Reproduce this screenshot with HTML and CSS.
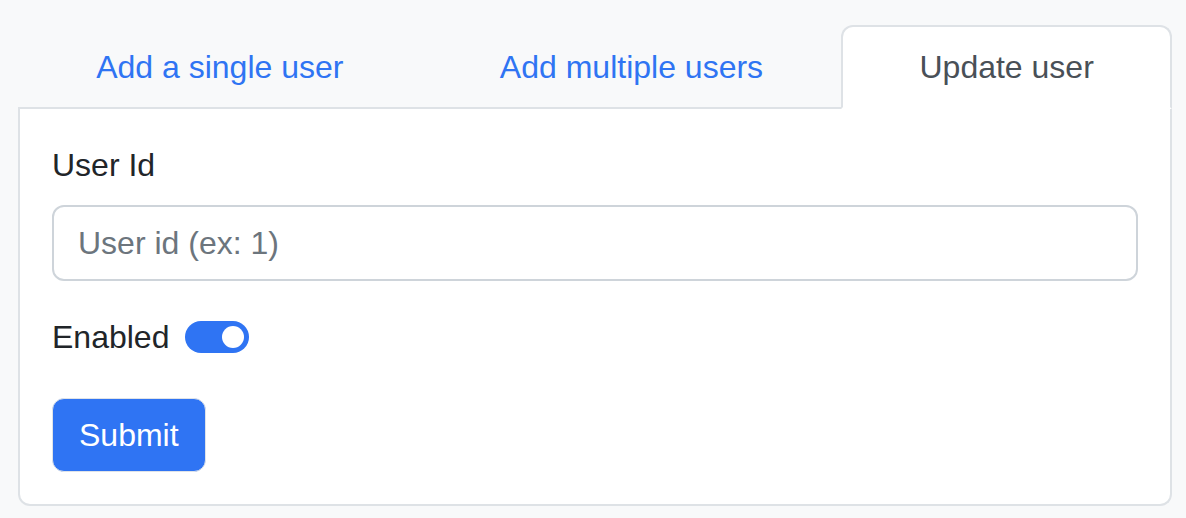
FILE: index.html
```html
<!DOCTYPE html>
<html lang="en">
<head>
<meta charset="utf-8">
<title>Users</title>
<link rel="stylesheet" href="styles.css">
</head>
<body>
<div class="wrap">
  <nav class="tabs">
    <a class="tab" href="#">Add a single user</a>
    <a class="tab" href="#">Add multiple users</a>
    <a class="tab active" href="#">Update user</a>
  </nav>
  <div class="panel">
    <label class="label" for="uid">User Id</label>
    <input class="input" id="uid" type="text" placeholder="User id (ex: 1)">
    <div class="check">
      <span class="check-label">Enabled</span>
      <span class="switch"><span class="knob"></span></span>
    </div>
    <button class="btn" type="button">Submit</button>
  </div>
</div>
</body>
</html>
```
FILE: styles.css
```css
* { box-sizing: border-box; }
html, body { margin: 0; padding: 0; }
body {
  background: #f8f9fa;
  font-family: "Liberation Sans", Arial, sans-serif;
  font-size: 32px;
  line-height: 48px;
  color: #212529;
}
.wrap {
  margin: 25px 14px 0 18px;
}
.tabs {
  display: flex;
  border-bottom: 2px solid #dee2e6;
}
.tab {
  flex: 1 1 auto;
  text-align: center;
  padding: 16px 32px;
  border: 2px solid transparent;
  border-radius: 12px 12px 0 0;
  margin-bottom: -2px;
  color: #2f74f3;
  text-decoration: none;
}
.tab.active {
  background: #fff;
  color: #495057;
  border-color: #dee2e6 #dee2e6 #fff;
}
.panel {
  background: #fff;
  border: 2px solid #dee2e6;
  border-top: 0;
  border-radius: 0 0 12px 12px;
  padding: 32px;
}
.label {
  display: block;
  margin-bottom: 16px;
}
.input {
  display: block;
  width: 100%;
  padding: 12px 24px;
  font: inherit;
  line-height: 48px;
  color: #212529;
  border: 2px solid #ced4da;
  border-radius: 12px;
  background: #fff;
  margin-bottom: 32px;
  outline: none;
}
.input::placeholder { color: #6c757d; }
.check {
  display: flex;
  align-items: center;
  gap: 16px;
  height: 48px;
  margin-bottom: 37px;
}
.switch {
  display: flex;
  align-items: center;
  justify-content: flex-end;
  width: 64px;
  height: 32px;
  padding: 0 5px;
  border-radius: 16px;
  background: #2f74f3;
}
.knob {
  width: 22px;
  height: 22px;
  border-radius: 50%;
  background: #fff;
}
.btn {
  display: block;
  font: inherit;
  line-height: 48px;
  padding: 12px 26px;
  color: #fff;
  background: #2f74f3;
  border: 1px solid #dfe3e8;
  border-radius: 12px;
}
```
